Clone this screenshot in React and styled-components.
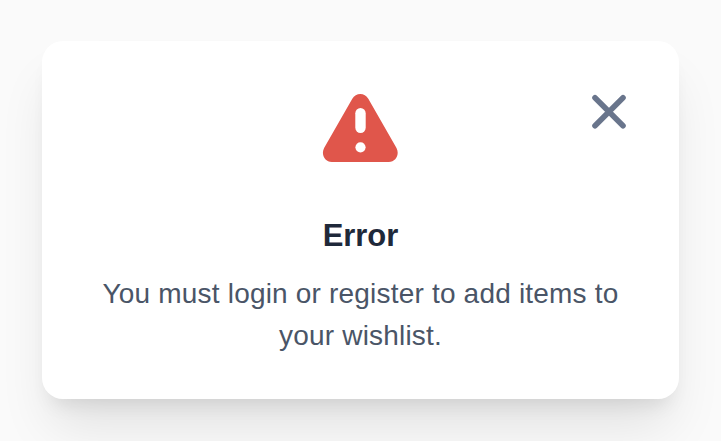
import React from "react";
import styled, { createGlobalStyle } from "styled-components";

const GlobalStyle = createGlobalStyle`
  * { box-sizing: border-box; }
  body { margin: 0; background: #fafafa; overflow: hidden; }
`;

const Page = styled.main`
  height: 441px;
  padding: 41px 42px 0;
  font-family: "Liberation Sans", Arial, sans-serif;
`;

const Card = styled.section`
  display: flex;
  flex-direction: column;
  align-items: center;
  width: 637px;
  height: 358px;
  padding-top: 49px;
  border-radius: 21px;
  background: #fff;
  box-shadow: 0 35px 52px -9px rgba(0, 0, 0, 0.1), 0 14px 20px -10px rgba(0, 0, 0, 0.1);
`;

const Header = styled.header`
  display: grid;
  grid-template-columns: 1fr 78px 1fr;
  width: 100%;
  height: 76px;
`;

const WarningIcon = styled.svg`
  grid-column: 2;
  width: 78px;
  height: 76px;
`;

const CloseButton = styled.button`
  justify-self: end;
  width: 42px;
  height: 42px;
  margin-right: 49px;
  padding: 0;
  border: 0;
  background: transparent;
  cursor: pointer;

  svg { display: block; }
`;

const Title = styled.h2`
  margin: 49px 0 0;
  color: #1f293a;
  font-size: 31px;
  font-weight: 700;
  line-height: 42px;
  letter-spacing: -0.05px;
`;

const Message = styled.p`
  margin: 16px 0 0;
  color: #4a5567;
  font-size: 28px;
  line-height: 42px;
  letter-spacing: 0.19px;
  text-align: center;
  white-space: nowrap;
`;

export default function App() {
  return (
    <>
      <GlobalStyle />
      <Page>
        <Card role="alertdialog" aria-labelledby="title" aria-describedby="message">
          <Header>
            <WarningIcon viewBox="0.7 0 78 76" aria-hidden="true">
              <path
                fill="#e0564b"
                d="M31 8.7C34.4 2.3 43.6 2.3 47 8.7L75.2 58C78.5 64.5 74.6 72 67.5 72H10.5C3.4 72-.5 64.5 2.8 58Z"
              />
              <rect x="34" y="18" width="10.4" height="25" rx="5.2" fill="#fff" />
              <circle cx="39.2" cy="57.3" r="5.1" fill="#fff" />
            </WarningIcon>
            <CloseButton aria-label="Close">
              <svg width="42" height="42" viewBox="0 0 42 42">
                <path d="M7 7.7 35 35.7M35 7.7 7 35.7" stroke="#69758c" strokeWidth="5.6" strokeLinecap="round" />
              </svg>
            </CloseButton>
          </Header>
          <Title id="title">Error</Title>
          <Message id="message">
            You must login or register to add items to
            <br />
            your wishlist.
          </Message>
        </Card>
      </Page>
    </>
  );
}
